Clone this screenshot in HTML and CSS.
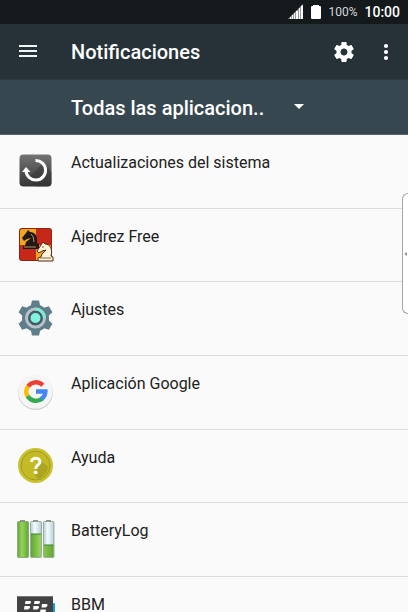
FILE: index.html
```html
<!DOCTYPE html>
<html lang="es">
<head>
    <meta charset="utf-8">
    <meta name="viewport" content="width=device-width, initial-scale=1">
    <title>Notificaciones</title>
    <link rel="stylesheet" href="styles.css">
</head>
<body>
    <!-- Status bar -->
    <div class="statusbar">
        <svg width="16" height="16" viewBox="0 0 16 16" fill="#fff">
            <path d="M2 15v-2h1v2zM4 15v-4h1v4zM6 15V9h1v6zM8 15V7h2v8zM11 15V4h1v11zM13 15V2l2-1v14z"/>
            <path d="M0 15L15 0v15z" opacity=".55"/>
        </svg>
        <svg class="battery" width="10" height="16" viewBox="0 0 10 16" fill="#fff">
            <path d="M2 1h6v1h1q1 0 1 1v11q0 1-1 1H1q-1 0-1-1V3q0-1 1-1h1z"/>
        </svg>
        <span class="percent">100%</span>
        <span class="clock">10:00</span>
    </div>

    <!-- App bar -->
    <header class="appbar">
        <button class="icon-btn menu-btn" aria-label="Menú">
            <svg width="18" height="14" viewBox="0 0 18 14" fill="#f0f5f6">
                <path d="M0 0h18v2H0zM0 5h18v2H0zM0 10h18v2H0z"/>
            </svg>
        </button>
        <h1>Notificaciones</h1>
        <button class="icon-btn" aria-label="Ajustes">
            <svg width="24" height="24" viewBox="0 0 24 24" fill="#fff">
                <path d="M19.43 12.98c.04-.32.07-.64.07-.98s-.03-.66-.07-.98l2.11-1.65c.19-.15.24-.42.12-.64l-2-3.46c-.12-.22-.39-.3-.61-.22l-2.49 1c-.52-.4-1.08-.73-1.69-.98l-.38-2.65C14.46 2.18 14.25 2 14 2h-4c-.25 0-.46.18-.49.42l-.38 2.65c-.61.25-1.17.59-1.69.98l-2.49-1c-.23-.09-.49 0-.61.22l-2 3.46c-.13.22-.07.49.12.64l2.11 1.65c-.04.32-.07.65-.07.98s.03.66.07.98l-2.11 1.65c-.19.15-.24.42-.12.64l2 3.46c.12.22.39.3.61.22l2.49-1c.52.4 1.08.73 1.69.98l.38 2.65c.03.24.24.42.49.42h4c.25 0 .46-.18.49-.42l.38-2.65c.61-.25 1.17-.59 1.69-.98l2.49 1c.23.09.49 0 .61-.22l2-3.46c.12-.22.07-.49-.12-.64l-2.11-1.65zM12 15.5c-1.93 0-3.5-1.57-3.5-3.5s1.57-3.5 3.5-3.5 3.5 1.57 3.5 3.5-1.57 3.5-3.5 3.5z"/>
            </svg>
        </button>
        <button class="icon-btn more-btn" aria-label="Más opciones">
            <svg width="6" height="18" viewBox="0 0 6 18" fill="#fff">
                <circle cx="3" cy="3" r="2.1"/>
                <circle cx="3" cy="9" r="2.1"/>
                <circle cx="3" cy="15" r="2.1"/>
            </svg>
        </button>
    </header>

    <!-- Filter -->
    <div class="filter">
        <select class="filter-select" aria-label="Filtrar aplicaciones">
            <option>Todas las aplicacion..</option>
        </select>
        <svg width="10" height="6" viewBox="0 0 10 6" fill="#fff"><path d="M0 0h10L5 5z"/></svg>
    </div>

    <!-- App list -->
    <ul class="apps">
        <li>
            <svg class="app-icon" viewBox="0 0 36 36">
                <defs>
                    <linearGradient id="update" x1="0" y1="0" x2="0" y2="1">
                        <stop offset="0" stop-color="#747474"/>
                        <stop offset="1" stop-color="#353535"/>
                    </linearGradient>
                </defs>
                <rect x="1.5" y="1.5" width="32" height="32" rx="4" fill="url(#update)"/>
                <path d="M25 10l8.5 9V30q0 3.500-4 3.500H18l-8-8z" fill="#333" opacity=".5"/>
                <path d="M17.500 7.500A9.800 9.800 0 1 1 8 18" fill="none" stroke="#fff" stroke-width="3"/>
                <path d="M4 19l4-5 4.500 5z" fill="#fff"/>
            </svg>
            <span>Actualizaciones del sistema</span>
        </li>
        <li>
            <svg class="app-icon" viewBox="0 0 36 36">
                <rect x="1" y="1" width="33" height="33" rx="3" fill="#8c2415"/>
                <path d="M2 4q0-2 2-2h14v16H2z" fill="#f3a51b"/>
                <path d="M18 2h13q2 0 2 2v14H18z" fill="#c62817"/>
                <path d="M2 18h16v15H4q-2 0-2-2z" fill="#c62817"/>
                <path d="M18 18h15v15H18z" fill="#f3a51b"/>
                <path d="M7 19l1-4 5-4-4 1-3 2-2-3 4-5 2-3 2 2c5 0 8 4 7 11l2 1v5H5v-3z" fill="#211713"/>
                <path d="M6 20h12M13 7q3 2 3 8" fill="none" stroke="#c0a483" stroke-width=".9"/>
                <path d="M23 30l1-3 4-4-4 1-3 2-2-2 4-6 2-3 2 2c5 0 8 5 6 12l2 1v4H20v-3z" fill="#fff3d8" stroke="#4d2b19"/>
                <path d="M22 31h11" stroke="#89633d"/>
                <circle cx="25" cy="20" r=".7" fill="#4d2b19"/>
            </svg>
            <span>Ajedrez Free</span>
        </li>
        <li>
            <svg class="app-icon" viewBox="0 0 36 36">
                <g fill="#607d8a">
                    <circle cx="17.500" cy="18" r="13.500"/>
                    <path id="tooth" d="M12.500 7l1.500-6.500h7L22.500 7z"/>
                    <use href="#tooth" transform="rotate(60 17.500 18)"/>
                    <use href="#tooth" transform="rotate(120 17.500 18)"/>
                    <use href="#tooth" transform="rotate(180 17.500 18)"/>
                    <use href="#tooth" transform="rotate(240 17.500 18)"/>
                    <use href="#tooth" transform="rotate(300 17.500 18)"/>
                </g>
                <circle cx="17.500" cy="18" r="9" fill="#455a64" stroke="#b6c4ca" stroke-width="3"/>
                <path d="M17.500 9A9 9 0 0 1 26.500 18" fill="none" stroke="#7fe9d6" stroke-width="3"/>
                <circle cx="17.500" cy="18" r="5" fill="#80f4df"/>
            </svg>
            <span>Ajustes</span>
        </li>
        <li>
            <svg class="app-icon" viewBox="0 0 36 36">
                <circle cx="17.500" cy="18.500" r="17.500" fill="#cfcfcf"/>
                <circle cx="17.500" cy="17.500" r="17.200" fill="#f5f5f5"/>
                <g fill="none" stroke-width="4.400">
                    <path d="M10 12.500A9.600 9.600 0 0 1 24.800 11.200" stroke="#ea4335"/>
                    <path d="M10 12.200A9.600 9.600 0 0 0 10 22.800" stroke="#fbbc05"/>
                    <path d="M9.600 22.200A9.600 9.600 0 0 0 24.200 24.500" stroke="#34a853"/>
                    <path d="M18 17.500H27.400A9.600 9.600 0 0 1 23.500 25" stroke="#4285f4"/>
                </g>
            </svg>
            <span>Aplicación Google</span>
        </li>
        <li>
            <svg class="app-icon" viewBox="0 0 36 36">
                <circle cx="17.500" cy="17.500" r="17.500" fill="#c9c032"/>
                <circle cx="17.500" cy="17.500" r="14.500" fill="#c3ba25" stroke="#a29c20"/>
                <path d="M21 11l9 8c-1 6-5 10-10 12l-4-5 1-7z" fill="#9e9720" opacity=".6"/>
                <path d="M13.500 14c0-5 8.500-5 8.500-.5 0 3.500-4.300 3.500-4.300 7.500" fill="none" stroke="#fff" stroke-width="3"/>
                <circle cx="17.700" cy="24.300" r="1.900" fill="#fff"/>
            </svg>
            <span>Ayuda</span>
        </li>
        <li>
            <svg class="app-icon" viewBox="0 0 36 36">
                <defs>
                    <linearGradient id="charge">
                        <stop offset="0" stop-color="#62a532"/>
                        <stop offset=".4" stop-color="#96d45b"/>
                        <stop offset="1" stop-color="#62a532"/>
                    </linearGradient>
                    <linearGradient id="glass">
                        <stop offset="0" stop-color="#b8cdd4"/>
                        <stop offset=".4" stop-color="#f4fcff"/>
                        <stop offset="1" stop-color="#b8cdd4"/>
                    </linearGradient>
                </defs>
                <path d="M2 -1h5v2H2zM15 -1h5v2h-5zM28 -1h5v2h-5z" fill="#8c9090"/>
                <g stroke="#7a9378" stroke-width=".7">
                    <rect x="-.5" y=".5" width="11" height="36" rx="1" fill="url(#charge)"/>
                    <rect x="12.500" y=".5" width="11" height="36" rx="1" fill="url(#glass)"/>
                    <rect x="25.500" y=".5" width="10.500" height="36" rx="1" fill="url(#glass)"/>
                </g>
                <path d="M13 13h10v23H13zM26 24h9.500v12H26z" fill="url(#charge)"/>
                <path d="M13 13h10M26 24h9.500" stroke="#43802c"/>
            </svg>
            <span>BatteryLog</span>
        </li>
        <li>
            <svg class="app-icon" viewBox="0 0 36 36">
                <rect x="16" y="8" width="21" height="27" rx="1" fill="#13a3d2"/>
                <rect x="-1" y="1" width="36" height="29" rx="1" fill="#424242"/>
                <path d="M-1 1h36v1H-1z" fill="#777"/>
                <path d="M7.500 6h4q2 0 1.500 1.500T11 9H7zM16.500 6h4q2 0 1.500 1.500T20 9h-4zM6.500 11h4q2 0 1.500 1.500T10 14.500H6zM15.500 11h4q2 0 1.500 1.500t-2 2h-4zM24 9h4q2 0 1.500 1.500t-2 2h-4zM22.500 14.500h4q2 0 1.500 1.500t-2 2h-4zM14.500 17h4q2 0 1.500 1.500t-2 2h-4z" fill="#fff"/>
            </svg>
            <span>BBM</span>
        </li>
    </ul>

    <!-- Edge tab -->
    <button class="edge-tab" aria-label="Abrir panel">
        <svg width="3" height="4" viewBox="0 0 3 4" fill="#999"><path d="M3 0v4L0 2z"/></svg>
    </button>
</body>
</html>
```

FILE: styles.css
```css
* {
    box-sizing: border-box;
}
body {
    display: flex;
    flex-direction: column;
    margin: 0;
    height: 100vh;
    position: relative;
    background: #fafafa;
    color: #212121;
    font-family: Roboto, sans-serif;
}
svg {
    display: block;
    flex-shrink: 0;
}
button {
    border: none;
    padding: 0;
    background: none;
}

/* Status bar */
.statusbar {
    display: flex;
    flex-shrink: 0;
    align-items: center;
    justify-content: flex-end;
    height: 24px;
    padding-right: 8px;
    background: #14191c;
    color: white;
}
.battery {
    margin-left: 7px;
}
.percent {
    margin-left: 7px;
    font-size: 12px;
    color: #d5d8d9;
}
.clock {
    margin-left: 7px;
    font-size: 14px;
    font-weight: 500;
}

/* App bar */
.appbar {
    display: flex;
    flex-shrink: 0;
    align-items: center;
    height: 56px;
    background: #263238;
    border-bottom: 1px solid #2d3b41;
    color: white;
}
.appbar h1 {
    flex: 1;
    margin: 0;
    font-size: 20px;
    font-weight: 500;
}
.icon-btn {
    display: flex;
    align-items: center;
    justify-content: center;
    width: 40px;
    height: 48px;
}
.menu-btn {
    justify-content: flex-start;
    width: 71px;
    padding-left: 19px;
}
.more-btn {
    width: 44px;
}

/* Filter */
.filter {
    display: flex;
    flex-shrink: 0;
    align-items: center;
    height: 55px;
    padding-left: 71px;
    background: #37474f;
    border-bottom: 1px solid #56646b;
}
.filter-select {
    appearance: none;
    width: 223px;
    height: 48px;
    padding: 2px 0 0;
    border: none;
    background: none;
    color: white;
    font-family: inherit;
    font-size: 20px;
    font-weight: 500;
}

/* App list, scrolls under the bars */
.apps {
    flex: 1;
    min-height: 0;
    margin: 0;
    padding: 0;
    list-style: none;
    overflow-y: auto;
    scrollbar-width: none;
}
.apps li {
    display: flex;
    align-items: flex-start;
    height: 74px;
    padding: 18px 18px 0;
    border-bottom: 1px solid #dcdcdc;
    font-size: 16px;
    line-height: 20px;
}
.apps li:nth-child(3n+2) {
    height: 73px;
}
.app-icon {
    width: 36px;
    height: 36px;
    margin-right: 17px;
    overflow: visible;
}

/* Tab on the right edge, over the list */
.edge-tab {
    position: absolute;
    top: 193px;
    right: 0;
    display: flex;
    align-items: center;
    width: 6px;
    height: 121px;
    padding-left: 1px;
    border: 1px solid #a5a5a5;
    border-right: none;
    border-radius: 6px 0 0 6px;
    background: white;
}
```
